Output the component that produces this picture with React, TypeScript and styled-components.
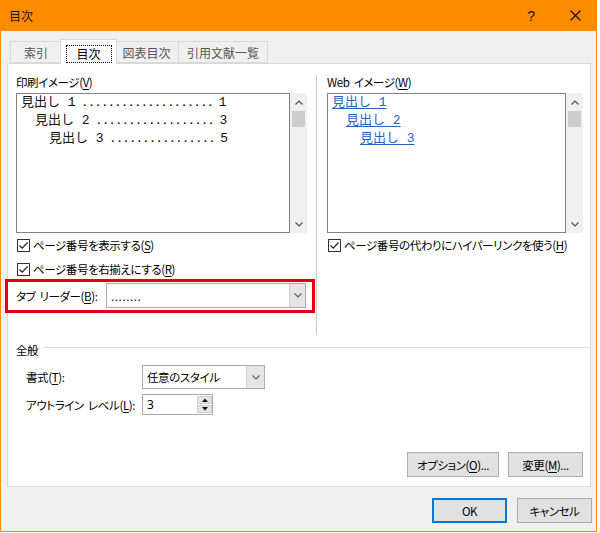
import React from 'react';
import styled, { createGlobalStyle } from 'styled-components';

const GlobalStyle = createGlobalStyle`
  html, body { margin: 0; padding: 0; background: #ffffff; }
  body {
    width: 600px; height: 533px; overflow: hidden;
    font-family: "Noto Sans CJK JP", "Noto Sans", sans-serif;
    font-size: 11.5px; color: #000;
    letter-spacing: -0.4px;
    word-spacing: 2px;
    font-feature-settings: "palt";
  }
  * { box-sizing: border-box; }
  u { text-underline-offset: 2px; }
`;

const Window = styled.div`
  width: 597px;
  height: 532px;
  border: 1px solid #ff8c00;
  border-top: none;
  background: #f0f0f0;
  display: flex;
  flex-direction: column;
`;

const TitleBar = styled.div`
  height: 31px;
  flex: 0 0 31px;
  background: #ff8c00;
  display: flex;
  align-items: center;
  padding-left: 9px;
  margin: 0 -1px;
`;

const TitleText = styled.div`
  flex: 1;
  font-size: 12px;
  letter-spacing: 0;
  color: #1a1a1a;
`;

const TitleButton = styled.div`
  width: 44px;
  height: 31px;
  display: flex;
  align-items: center;
  justify-content: center;
  font-family: "Liberation Sans", sans-serif;
  font-size: 14px;
  color: #111;
`;

const Body = styled.div`
  flex: 1;
  display: flex;
  flex-direction: column;
  padding: 8px 5px 0 6px;
`;

const TabStrip = styled.div`
  display: flex;
  align-items: flex-end;
  height: 24px;
  padding-left: 3px;
  position: relative;
  z-index: 1;
`;

const Tab = styled.div<{ $w: number; $active?: boolean }>`
  width: ${p => p.$w}px;
  height: ${p => (p.$active ? 25 : 22)}px;
  margin: ${p => (p.$active ? '0 -2px -1px -2px' : '0 0 0 -1px')};
  background: ${p => (p.$active ? '#ffffff' : '#f0f0f0')};
  border: 1px solid #d9d9d9;
  border-bottom: ${p => (p.$active ? 'none' : '1px solid #d9d9d9')};
  color: ${p => (p.$active ? '#000' : '#555')};
  display: flex;
  align-items: center;
  justify-content: center;
  position: relative;
  z-index: ${p => (p.$active ? 2 : 1)};
  font-size: 12px;
  letter-spacing: 0;
  &:first-child { margin-left: 0; }
`;

const FocusRect = styled.span`
  display: flex;
  align-items: center;
  justify-content: center;
  width: 46px;
  height: 18px;
  margin-top: 3px;
  border: 1px dotted #000;
`;

const Panel = styled.div`
  height: 424px;
  flex: 0 0 424px;
  background: #ffffff;
  border: 1px solid #d9d9d9;
  display: flex;
  flex-direction: column;
  padding: 10px 7px 9px 8px;
`;

const TopSection = styled.div`
  display: flex;
  align-items: stretch;
`;

const Column = styled.div<{ $w?: number }>`
  ${p => (p.$w ? `width: ${p.$w}px; flex: 0 0 ${p.$w}px;` : 'flex: 1;')}
  display: flex;
  flex-direction: column;
  padding-bottom: ${p => (p.$w ? 22 : 0)}px;
`;

const VSeparator = styled.div`
  width: 1px;
  background: #c9c9c9;
  margin: 1px 10px 0 9px;
`;

const Label = styled.div`
  height: 16px;
  line-height: 16px;
  margin-bottom: 3px;
  white-space: nowrap;
`;

const PreviewRow = styled.div`
  display: flex;
  height: 140px;
`;

const PreviewBox = styled.div`
  flex: 1;
  border: 1px solid #828282;
  background: #fff;
  padding: 0 4px;
  overflow: hidden;
`;

const Scrollbar = styled.div`
  width: 17px;
  flex: 0 0 17px;
  background: #f0f0f0;
  display: flex;
  flex-direction: column;
`;

const ScrollArrow = styled.div`
  height: 18px;
  display: flex;
  align-items: center;
  justify-content: center;
`;

const ScrollTrack = styled.div`
  flex: 1;
  display: flex;
  flex-direction: column;
  padding: 0 2px;
`;

const ScrollThumb = styled.div`
  height: 16px;
  background: #cdcdcd;
`;

const TocLine = styled.div<{ $indent: number }>`
  display: flex;
  align-items: baseline;
  height: 18px;
  line-height: 18px;
  padding-left: ${p => p.$indent}px;
  font-family: "Liberation Mono", "Noto Sans CJK JP", monospace;
  font-feature-settings: normal;
  letter-spacing: 0;
  word-spacing: 0;
  font-size: 13px;
  color: #111;
  white-space: nowrap;
`;

const Leader = styled.span`
  font-size: 11px;
  margin: 0 5px 0 6px;
  font-weight: bold;
`;

const WebLine = styled.div<{ $indent: number }>`
  height: 18px;
  line-height: 18px;
  padding-left: ${p => p.$indent}px;
  font-family: "Liberation Mono", "Noto Sans CJK JP", monospace;
  font-feature-settings: normal;
  letter-spacing: 0;
  word-spacing: 0;
  font-size: 13px;
  white-space: nowrap;
`;

const WebLink = styled.span`
  color: #2462c4;
  text-decoration: underline;
  text-underline-offset: 2px;
`;

const CheckRow = styled.div`
  display: flex;
  align-items: center;
  height: 24px;
  padding-left: 1px;
  gap: 3px;
  white-space: nowrap;
`;

const CheckBox = styled.span`
  width: 13px;
  height: 13px;
  flex: 0 0 13px;
  border: 1px solid #333;
  background: #fff;
  display: flex;
  align-items: center;
  justify-content: center;
`;

const Highlight = styled.div`
  margin: -2px -8px 0 -11px;
  border: 3px solid #e00010;
  padding: 1px 6px 2px 8px;
  display: flex;
  align-items: center;
`;

const FieldLabel = styled.div<{ $w: number; $indent?: number }>`
  flex: 0 0 ${p => p.$w}px;
  padding-left: ${p => p.$indent || 0}px;
  white-space: nowrap;
`;

const Combo = styled.div<{ $w: number; $h: number; $arrow: number }>`
  width: ${p => p.$w}px;
  height: ${p => p.$h}px;
  border: 1px solid #acacac;
  background: #fff;
  display: flex;
  align-items: stretch;
  & > span:first-child {
    flex: 1;
    display: flex;
    align-items: center;
    padding-left: 4px;
  }
  & > span:last-child {
    flex: 0 0 ${p => p.$arrow}px;
    background: #e5e5e5;
    border-left: 1px solid #d0d0d0;
    display: flex;
    align-items: center;
    justify-content: center;
  }
`;

const LeaderValue = styled.span`
  letter-spacing: 0.6px;
`;

const GroupHeader = styled.div`
  display: flex;
  align-items: center;
  height: 16px;
  margin-top: 7px;
`;

const GroupLine = styled.div`
  flex: 1;
  height: 1px;
  background: #dcdcdc;
  margin: -5px -7px 0 6px;
`;

const FieldRow = styled.div<{ $top: number; $h: number }>`
  display: flex;
  align-items: center;
  height: ${p => p.$h}px;
  margin-top: ${p => p.$top}px;
`;

const SpinBox = styled.div`
  width: 71px;
  height: 21px;
  border: 1px solid #acacac;
  background: #fff;
  display: flex;
`;

const SpinValue = styled.span`
  flex: 1;
  display: flex;
  align-items: center;
  padding-left: 4px;
  font-family: "Noto Sans", sans-serif;
  font-size: 12px;
`;

const SpinButtons = styled.span`
  flex: 0 0 15px;
  display: flex;
  flex-direction: column;
  gap: 1px;
  padding: 1px 0 1px 0;
`;

const SpinBtn = styled.span`
  flex: 1;
  background: #e5e5e5;
  border: 1px solid #cfcfcf;
  display: flex;
  align-items: center;
  justify-content: center;
`;

const Spacer = styled.div`
  flex: 1;
`;

const ButtonRow = styled.div<{ $gap: number }>`
  display: flex;
  justify-content: flex-end;
  gap: ${p => p.$gap}px;
`;

const Button = styled.div<{ $w: number; $default?: boolean }>`
  width: ${p => p.$w}px;
  height: 25px;
  background: #e1e1e1;
  border: 1px solid ${p => (p.$default ? '#0078d7' : '#adadad')};
  box-shadow: ${p => (p.$default ? 'inset 0 0 0 1px #0078d7' : 'none')};
  display: flex;
  align-items: center;
  justify-content: center;
  white-space: nowrap;
`;

const Footer = styled.div`
  flex: 1;
  display: flex;
  justify-content: flex-end;
  align-items: flex-start;
  gap: 10px;
  padding: 11px 0 0 0;
  margin-right: -1px;
`;

const Chevron = ({ up, color = '#606060' }: { up?: boolean; color?: string }) => (
  <svg width="8" height="5" viewBox="0 0 8 5">
    <path
      d={up ? 'M0.5 4.5 L4 1 L7.5 4.5' : 'M0.5 0.5 L4 4 L7.5 0.5'}
      fill="none"
      stroke={color}
      strokeWidth="1.2"
    />
  </svg>
);

const Tri = ({ up }: { up?: boolean }) => (
  <svg width="6" height="4" viewBox="0 0 6 4">
    <path d={up ? 'M0 4 L3 0.5 L6 4 Z' : 'M0 0 L6 0 L3 3.5 Z'} fill="#111" />
  </svg>
);

const Check = () => (
  <svg width="11" height="11" viewBox="0 0 11 11">
    <path d="M1.5 5.5 L4.2 8.2 L9.5 2.5" fill="none" stroke="#222" strokeWidth="1.2" />
  </svg>
);

const VScroll = () => (
  <Scrollbar>
    <ScrollArrow>
      <Chevron up color="#505050" />
    </ScrollArrow>
    <ScrollTrack>
      <ScrollThumb />
    </ScrollTrack>
    <ScrollArrow>
      <Chevron color="#505050" />
    </ScrollArrow>
  </Scrollbar>
);

const tocRows = [
  { title: '見出し 1', page: '1', indent: 0, dots: 20 },
  { title: '見出し 2', page: '3', indent: 14, dots: 18 },
  { title: '見出し 3', page: '5', indent: 28, dots: 16 },
];

export default function App() {
  return (
    <>
      <GlobalStyle />
      <Window>
        <TitleBar>
          <TitleText>目次</TitleText>
          <TitleButton>?</TitleButton>
          <TitleButton>
            <svg width="11" height="11" viewBox="0 0 11 11">
              <path d="M0.5 0.5 L10.5 10.5 M10.5 0.5 L0.5 10.5" stroke="#111" strokeWidth="1.1" />
            </svg>
          </TitleButton>
        </TitleBar>
        <Body>
          <TabStrip>
            <Tab $w={52}>索引</Tab>
            <Tab $w={57} $active>
              <FocusRect>目次</FocusRect>
            </Tab>
            <Tab $w={65}>図表目次</Tab>
            <Tab $w={90}>引用文献一覧</Tab>
          </TabStrip>
          <Panel>
            <TopSection>
              <Column $w={291}>
                <Label>
                  印刷イメージ(<u>V</u>)
                </Label>
                <PreviewRow>
                  <PreviewBox>
                    {tocRows.map(r => (
                      <TocLine key={r.title} $indent={r.indent}>
                        <span>{r.title}</span>
                        <Leader>{'.'.repeat(r.dots)}</Leader>
                        <span>{r.page}</span>
                      </TocLine>
                    ))}
                  </PreviewBox>
                  <VScroll />
                </PreviewRow>
                <CheckRow>
                  <CheckBox>
                    <Check />
                  </CheckBox>
                  <span>
                    ページ番号を表示する(<u>S</u>)
                  </span>
                </CheckRow>
                <CheckRow>
                  <CheckBox>
                    <Check />
                  </CheckBox>
                  <span>
                    ページ番号を右揃えにする(<u>R</u>)
                  </span>
                </CheckRow>
                <Highlight>
                  <FieldLabel $w={90}>
                    タブ リーダー(<u>B</u>):
                  </FieldLabel>
                  <Combo $w={200} $h={25} $arrow={16}>
                    <LeaderValue>........</LeaderValue>
                    <span>
                      <Chevron />
                    </span>
                  </Combo>
                </Highlight>
              </Column>
              <VSeparator />
              <Column>
                <Label>
                  Web イメージ(<u>W</u>)
                </Label>
                <PreviewRow>
                  <PreviewBox>
                    {tocRows.map(r => (
                      <WebLine key={r.title} $indent={r.indent}>
                        <WebLink>{r.title}</WebLink>
                      </WebLine>
                    ))}
                  </PreviewBox>
                  <VScroll />
                </PreviewRow>
                <CheckRow>
                  <CheckBox>
                    <Check />
                  </CheckBox>
                  <span>
                    ページ番号の代わりにハイパーリンクを使う(<u>H</u>)
                  </span>
                </CheckRow>
              </Column>
            </TopSection>
            <GroupHeader>
              <span>全般</span>
              <GroupLine />
            </GroupHeader>
            <FieldRow $top={7} $h={24}>
              <FieldLabel $w={126} $indent={10}>
                書式(<u>T</u>):
              </FieldLabel>
              <Combo $w={123} $h={24} $arrow={18}>
                <span>任意のスタイル</span>
                <span>
                  <Chevron />
                </span>
              </Combo>
            </FieldRow>
            <FieldRow $top={5} $h={21}>
              <FieldLabel $w={126} $indent={10}>
                アウトライン レベル(<u>L</u>):
              </FieldLabel>
              <SpinBox>
                <SpinValue>3</SpinValue>
                <SpinButtons>
                  <SpinBtn>
                    <Tri up />
                  </SpinBtn>
                  <SpinBtn>
                    <Tri />
                  </SpinBtn>
                </SpinButtons>
              </SpinBox>
            </FieldRow>
            <Spacer />
            <ButtonRow $gap={9}>
              <Button $w={92}>
                オプション(<u>O</u>)...
              </Button>
              <Button $w={75}>
                変更(<u>M</u>)...
              </Button>
            </ButtonRow>
          </Panel>
          <Footer>
            <Button $w={75} $default>
              OK
            </Button>
            <Button $w={75}>キャンセル</Button>
          </Footer>
        </Body>
      </Window>
    </>
  );
}
